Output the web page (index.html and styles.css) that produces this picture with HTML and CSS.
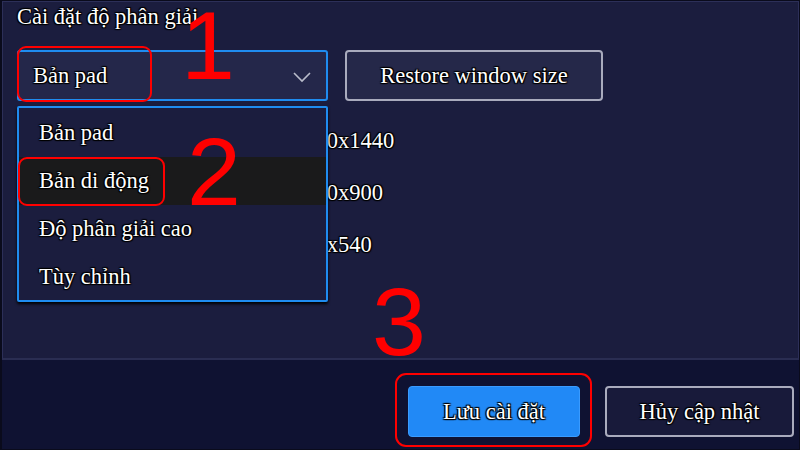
FILE: index.html
```html
<!DOCTYPE html>
<html lang="vi">
<head>
<meta charset="utf-8">
<link rel="stylesheet" href="styles.css">
</head>
<body>
<div class="frame">
  <div class="main">
    <h1 class="title">Cài đặt độ phân giải</h1>
    <div class="row">
      <div class="select-wrap">
        <div class="select">
          <span class="select-value">Bản pad</span>
          <svg class="chev" width="20" height="12" viewBox="0 0 20 12"><path d="M2 2 L10 10 L18 2" fill="none" stroke="#b9bccb" stroke-width="1.6"/></svg>
        </div>
        <ul class="dropdown">
          <li class="opt">Bản pad</li>
          <li class="opt hover">Bản di động</li>
          <li class="opt">Độ phân giải cao</li>
          <li class="opt">Tùy chỉnh</li>
        </ul>
        <div class="mark mark1"></div>
        <div class="mark mark2"></div>
      </div>
      <button class="btn btn-outline restore">Restore window size</button>
    </div>
    <div class="res-list">
      <div class="res">2560x1440</div>
      <div class="res">1600x900</div>
      <div class="res">960x540</div>
    </div>
    <span class="num num1">1</span>
    <span class="num num2">2</span>
    <span class="num num3">3</span>
  </div>
  <div class="footer">
    <div class="save-wrap">
      <button class="btn btn-primary">Lưu cài đặt</button>
      <div class="mark mark3"></div>
    </div>
    <button class="btn btn-outline cancel">Hủy cập nhật</button>
  </div>
</div>
</body>
</html>
```
FILE: styles.css
```css
html, body {
  margin: 0;
  padding: 0;
  background: #0c0e26;
}
.frame {
  width: 800px;
  height: 450px;
  box-sizing: border-box;
  border: 1px solid #0a0b1c;
  border-left: 2px solid #0a0b1c;
  display: flex;
  flex-direction: column;
  font-family: "Liberation Serif", "Times New Roman", serif;
  color: #ffffff;
  overflow: hidden;
}
.main {
  position: relative;
  flex: 1;
  background: #1b1d3e;
  border: 1px solid #2c2f58;
  border-bottom: 2px solid #2a2d52;
  padding: 1px 0 0 14px;
}
.title, .select-value, .opt, .res, .btn {
  text-shadow: 0 0 1px #000, 1px 1px 1px #000, -1px -1px 1px #000, 1px -1px 1px #000, -1px 1px 1px #000;
}
.title {
  margin: 0;
  font-size: 22.5px;
  font-weight: normal;
  line-height: 28px;
}
.row {
  display: flex;
  gap: 17px;
  margin-top: 19px;
}
.select-wrap {
  position: relative;
  width: 311px;
}
.select {
  box-sizing: border-box;
  height: 51px;
  border: 2px solid #1f8cf0;
  border-radius: 3px;
  background: #24274a;
  display: flex;
  align-items: center;
  justify-content: space-between;
  padding: 0 14px 0 14px;
}
.select-value {
  font-size: 22.5px;
}
.chev {
  margin-top: 2px;
}
.dropdown {
  position: absolute;
  z-index: 2;
  top: 56px;
  left: 0;
  width: 311px;
  height: 196px;
  box-sizing: border-box;
  margin: 0;
  padding: 1px 0;
  list-style: none;
  background: #1b1d3e;
  border: 2px solid #1f8cf0;
  border-radius: 2px;
  box-shadow: 0 2px 3px #000;
}
.opt {
  height: 48px;
  line-height: 48px;
  padding-left: 20px;
  font-size: 22.5px;
}
.opt.hover {
  background: #1a1a1b;
}
.btn {
  font-family: "Liberation Serif", "Times New Roman", serif;
  font-size: 22.5px;
  color: #ffffff;
  height: 51px;
  border-radius: 4px;
  cursor: pointer;
  padding: 0;
}
.btn-outline {
  border: 2px solid #a9abbd;
  background: #252849;
}
.restore {
  width: 258px;
}
.res-list {
  margin-top: 26px;
  padding-left: 276px;
  display: flex;
  flex-direction: column;
  gap: 25px;
}
.res {
  font-size: 22.5px;
  line-height: 27px;
}
.footer {
  height: 89px;
  background: #0f1232;
  display: flex;
  justify-content: flex-end;
  align-items: flex-start;
  gap: 25px;
  padding: 26px 5px 0 0;
  box-sizing: border-box;
}
.save-wrap {
  position: relative;
}
.btn-primary {
  width: 172px;
  border: 1px solid #3a9bff;
  background: #2189f6;
}
.cancel {
  width: 189px;
  background: #181a3a;
}
.mark {
  position: absolute;
  border: 2px solid #ff0000;
  border-radius: 9px;
  pointer-events: none;
  z-index: 3;
}
.mark1 {
  left: 0;
  top: -4px;
  width: 131px;
  height: 52px;
}
.mark2 {
  left: 1px;
  top: 107px;
  width: 143px;
  height: 45px;
}
.mark3 {
  left: -13px;
  top: -13px;
  width: 193px;
  height: 70px;
  border-radius: 11px;
}
.num {
  position: absolute;
  z-index: 4;
  font-family: "Liberation Sans", Arial, sans-serif;
  font-size: 97px;
  line-height: 1;
  color: #ff0000;
}
.num1 { left: 178px; top: -5px; }
.num2 { left: 184px; top: 121px; }
.num3 { left: 369px; top: 271px; }
```
